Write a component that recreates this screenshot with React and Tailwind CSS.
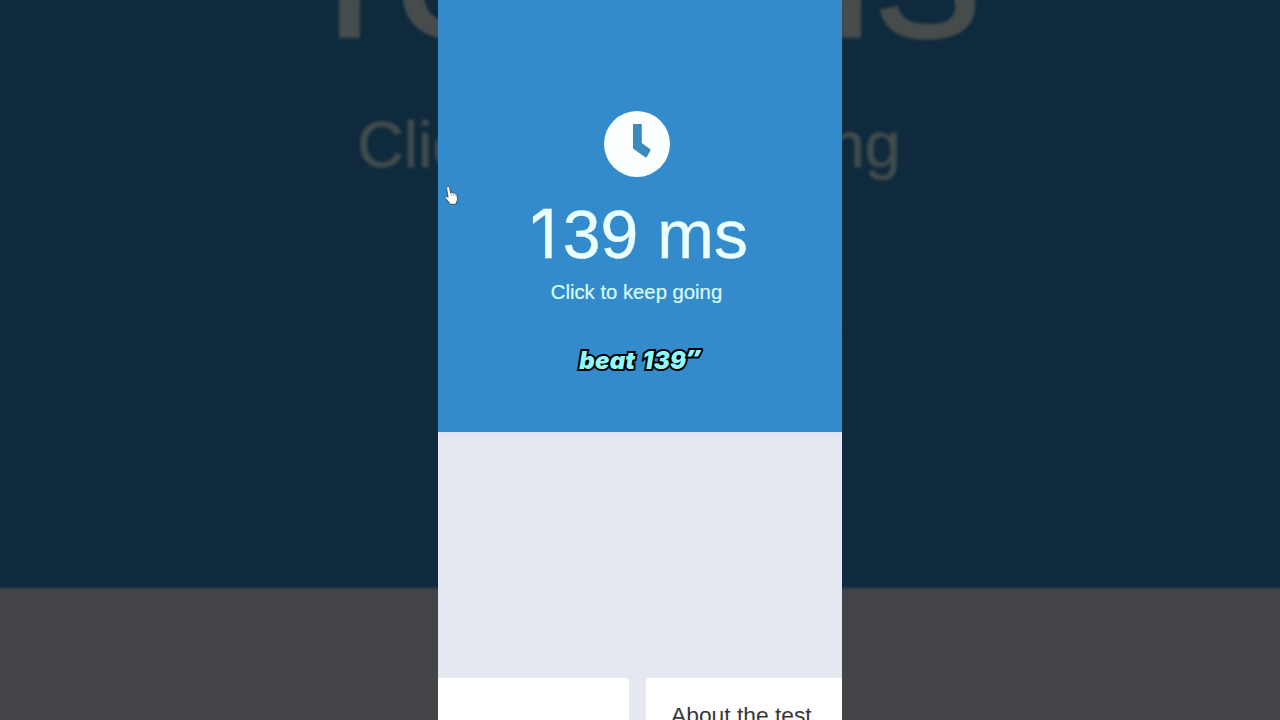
function ClockIcon() {
  return (
    <svg viewBox="0 0 66 66" className="h-[66px] w-[66px]">
      <circle cx="33" cy="33" r="33" fill="#fafeff" />
      <path
        d="M29.8 13H37a.8.8 0 0 1 .8.8V32l8.4 6.2a1 1 0 0 1 .2 1.4L42.7 46a1 1 0 0 1-1.4.2L29.7 38a1.6 1.6 0 0 1-.7-1.3V13.8a.8.8 0 0 1 .8-.8Z"
        fill="#3a8bbd"
      />
    </svg>
  );
}

function HandCursor() {
  return (
    <svg viewBox="0 0 16 20" className="absolute left-[5px] top-[184px] h-[22px] w-[17px]">
      <path
        d="M4.2 2.2c1-.5 1.8.1 2 1l1.1 5 .3-.6c.6-.5 1.4-.2 1.7.5.6-.5 1.5-.2 1.8.5.7-.4 1.6 0 1.8.8l.7 3.4c.3 1.7-.2 2.8-.8 3.8l-.2 1.8-5.5.6-.7-1.2L2 12.6c-.6-.9.6-2 1.7-1.2l1.1.8L3.4 3.8c-.1-.7.2-1.3.8-1.6Z"
        fill="#fff"
        stroke="#24465f"
        strokeWidth=".8"
        strokeLinejoin="round"
      />
      <path d="M7.4 8.2l.5 2.6M9.4 8.3l.5 2.5M11.2 8.8l.4 2.2" stroke="#5f87a3" strokeWidth=".6" />
    </svg>
  );
}

function ReactionScreen() {
  return (
    <div className="relative flex h-[720px] w-[404px] flex-col overflow-hidden bg-[#e5e8f1] font-['Liberation_Sans',Arial,sans-serif]">
      <section className="flex h-[432.4px] shrink-0 flex-col items-center bg-[#338bcc] pt-[111px] text-[#eaffff]">
        <div className="mr-[6px]">
          <ClockIcon />
        </div>
        <h1 className="mr-[7px] mt-[18px] h-[78px] whitespace-nowrap text-[68px] leading-[78px] [-webkit-text-stroke:0.4px_#eaffff]">
          <span className="inline-block h-[78px] w-[37.8px] pl-[5px] align-top font-['Inter',sans-serif] text-[67px] leading-[78px]">1</span>39 ms
        </h1>
        <p className="mr-[7px] mt-[8px] whitespace-nowrap text-[20.3px] leading-[23px] text-[#d9fcff] [-webkit-text-stroke:0.2px_#d9fcff]">
          Click to keep going
        </p>
        <p className="mr-px mt-[42px] whitespace-nowrap font-['Inter',sans-serif] text-[24px] font-black italic leading-[29px] tracking-[0.2px] text-[#8ffaff] [-webkit-text-stroke:4px_#000] [paint-order:stroke_fill] [text-shadow:1px_1px_0_#000] [word-spacing:2.5px]">
          beat 139<span className="font-['Open_Sans',sans-serif] text-[27px] font-extrabold leading-[20px]">”</span>
        </p>
      </section>

      <div className="h-[2px] shrink-0 bg-[#dfe3f8]" />

      <div className="mt-[243.6px] flex h-[42px] shrink-0 gap-[17px]">
        <div className="w-[191px] shrink-0 rounded-tr-[3px] bg-white" />
        <div className="flex-1 rounded-tl-[3px] bg-white pl-[25px] pt-[24px]">
          <h2 className="whitespace-nowrap text-[22.8px] leading-[26px] text-[#37373a]">About the test</h2>
        </div>
      </div>

      <HandCursor />
    </div>
  );
}

export default function App() {
  return (
    <div className="relative flex h-[720px] w-[1280px] justify-center overflow-hidden bg-black">
      {/* enlarged, dimmed copy behind the portrait video */}
      <div aria-hidden="true" className="absolute left-[438px] top-0 scale-[3.169]">
        <ReactionScreen />
      </div>
      <div className="absolute inset-0 bg-black/70 backdrop-blur-[1.5px]" />
      <main className="relative h-[720px] w-[404px]">
        <ReactionScreen />
      </main>
    </div>
  );
}
